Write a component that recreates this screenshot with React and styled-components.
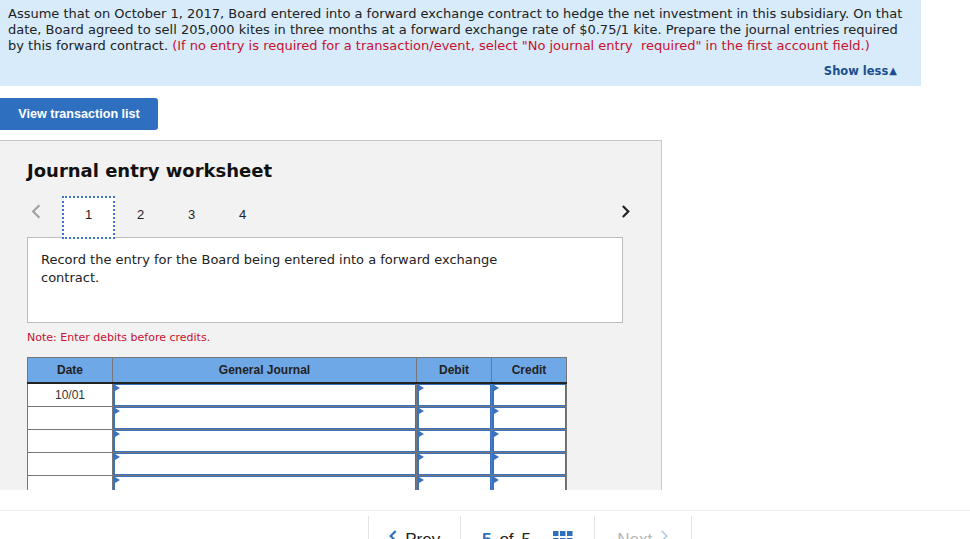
import React from 'react';
import styled, { createGlobalStyle } from 'styled-components';

const GlobalStyle = createGlobalStyle`
  html, body {
    margin: 0;
    padding: 0;
    background: #fff;
  }
  * {
    box-sizing: border-box;
  }
`;

const Page = styled.div`
  width: 970px;
  height: 539px;
  overflow: hidden;
  display: flex;
  flex-direction: column;
  font-family: 'DejaVu Sans', Verdana, sans-serif;
  color: #222;
`;

const Content = styled.div`
  height: 490px;
  overflow: hidden;
  flex-shrink: 0;
`;

const Question = styled.div`
  width: 921px;
  height: 86px;
  background: #d7ebfa;
  padding: 6px 8px 0 8px;
  font-size: 13px;
  line-height: 16px;
  p {
    margin: 0;
  }
  .hint {
    color: #c8102e;
  }
`;

const ShowLess = styled.div`
  display: flex;
  justify-content: flex-end;
  align-items: center;
  gap: 1px;
  margin-top: 9px;
  padding-right: 16px;
  font-size: 11.5px;
  font-weight: bold;
  color: #1c4f8f;
`;

const Button = styled.button`
  display: block;
  margin-top: 12px;
  width: 158px;
  height: 32px;
  border: none;
  border-radius: 0 3px 3px 0;
  background: #2f6fbf;
  color: #fff;
  font-family: 'Liberation Sans', Arial, sans-serif;
  font-weight: bold;
  font-size: 12.6px;
  padding: 0;
`;

const Panel = styled.div`
  margin-top: 10px;
  width: 662px;
  height: 400px;
  background: #f2f2f2;
  border-top: 1px solid #c9c9c9;
  border-right: 1px solid #c9c9c9;
  padding: 19px 0 0 27px;
`;

const Title = styled.h2`
  margin: 0;
  font-size: 18px;
  line-height: 22px;
  font-weight: bold;
  color: #111;
`;

const TabBar = styled.div`
  display: flex;
  align-items: flex-end;
  margin-top: 14px;
  width: 625px;
  height: 41px;
`;

const Arrow = styled.div`
  width: 35px;
  height: 41px;
  display: flex;
  align-items: center;
  padding: 0 0 11px 4px;
`;

const Tab = styled.div`
  width: ${p => p.$active ? '53px' : '51px'};
  height: ${p => p.$active ? '43px' : '41px'};
  display: flex;
  align-items: center;
  justify-content: center;
  padding-bottom: ${p => p.$active ? '6px' : '4px'};
  font-family: 'Liberation Sans', Arial, sans-serif;
  font-size: 13px;
  color: #222;
  background: ${p => p.$active ? '#fff' : 'transparent'};
  border: ${p => p.$active ? '2px dotted #3d73c4' : 'none'};
  position: relative;
  z-index: 2;
  margin-bottom: ${p => p.$active ? '-2px' : '0'};
`;

const Spacer = styled.div`
  flex: 1;
`;

const Description = styled.div`
  width: 596px;
  height: 86px;
  background: #fff;
  border: 1px solid #bdbdbd;
  padding: 13px 13px;
  font-size: 13px;
  line-height: 18px;
  p {
    margin: 0;
    max-width: 470px;
  }
`;

const Note = styled.div`
  margin-top: 8px;
  font-size: 11px;
  color: #c8102e;
`;

const Table = styled.table`
  margin-top: 13px;
  border-collapse: collapse;
  font-family: 'Liberation Sans', Arial, sans-serif;
  font-size: 12px;
  table-layout: fixed;
  width: 540px;
`;

const Th = styled.th`
  width: ${p => p.$w}px;
  height: 25px;
  background: #6fa8e6;
  color: #222;
  font-weight: bold;
  border: 1px solid #777;
  border-left: ${p => p.$first ? '1px solid #777' : '1px solid #222'};
  border-bottom: 2px solid #222;
  padding: 0;
`;

const DateCell = styled.td`
  height: 23px;
  border: 1px solid #777;
  background: #fff;
  text-align: center;
  vertical-align: top;
  padding-top: 4px;
  color: #333;
`;

const InputCell = styled.td`
  height: 23px;
  border: 1px solid #777;
  padding: 0;
  background: #fff;
`;

const Field = styled.div`
  position: relative;
  height: 22px;
  border: 1px solid #3a72bf;
  border-left-width: 2px;
  background: #fff;
  &::before {
    content: '';
    position: absolute;
    left: 0;
    top: 0;
    border-top: 3px solid transparent;
    border-bottom: 3px solid transparent;
    border-left: 5px solid #3a72bf;
  }
`;

const Footer = styled.div`
  flex: 1;
  padding-top: 20px;
`;

const Nav = styled.div`
  border-top: 1px solid #ececec;
  height: 60px;
  display: flex;
  padding: 5px 0 0 368px;
`;

const NavItem = styled.div`
  width: ${p => p.$w}px;
  border-left: 1px solid #e4e4e4;
  border-right: ${p => p.$last ? '1px solid #e4e4e4' : 'none'};
  display: flex;
  align-items: flex-start;
  justify-content: center;
  gap: 8px;
  padding-top: 14px;
  font-family: 'Liberation Sans', Arial, sans-serif;
  font-size: 17px;
  color: ${p => p.$muted ? '#b5b5b5' : '#222'};
  span.cur {
    color: #2f6fbf;
    font-weight: bold;
  }
`;

const Chevron = ({ dir = 'left', color, size = 14, weight = 2 }) => (
  <svg width={size * 0.7} height={size} viewBox="0 0 10 14">
    <path
      d={dir === 'left' ? 'M8 1 L2 7 L8 13' : 'M2 1 L8 7 L2 13'}
      fill="none"
      stroke={color}
      strokeWidth={weight}
    />
  </svg>
);

const GridIcon = () => (
  <svg width="20" height="14" viewBox="0 0 20 14">
    {[0, 7, 14].map(x => (
      <rect key={x} x={x} y="0" width="5.5" height="5" fill="#2f6fbf" />
    ))}
    {[0, 7, 14].map(x => (
      <rect key={'b' + x} x={x} y="7" width="5.5" height="5" fill="#2f6fbf" />
    ))}
  </svg>
);

const rows = ['10/01', '', '', '', '', ''];

export default function App() {
  return (
    <Page>
      <GlobalStyle />
      <Content>
        <Question>
          <p>
            Assume that on October 1, 2017, Board entered into a forward exchange contract to hedge the net investment in this subsidiary. On that date, Board agreed to sell 205,000 kites in three months at a forward exchange rate of $0.75/1 kite. Prepare the journal entries required by this forward contract.{' '}
            <span className="hint">(If no entry is required for a transaction/event, select "No journal entry&nbsp; required" in the first account field.)</span>
          </p>
          <ShowLess>Show less<span style={{ fontSize: 10 }}>▲</span></ShowLess>
        </Question>

        <Button>View transaction list</Button>

        <Panel>
          <Title>Journal entry worksheet</Title>
          <TabBar>
            <Arrow><Chevron dir="left" color="#a0a0a0" size={15} /></Arrow>
            <Tab $active>1</Tab>
            <Tab>2</Tab>
            <Tab>3</Tab>
            <Tab>4</Tab>
            <Spacer />
            <Arrow><Chevron dir="right" color="#222" size={13} weight={2.4} /></Arrow>
          </TabBar>
          <Description>
            <p>Record the entry for the Board being entered into a forward exchange contract.</p>
          </Description>
          <Note>Note: Enter debits before credits.</Note>
          <Table>
            <thead>
              <tr>
                <Th $w={85} $first>Date</Th>
                <Th $w={304}>General Journal</Th>
                <Th $w={75}>Debit</Th>
                <Th $w={75}>Credit</Th>
              </tr>
            </thead>
            <tbody>
              {rows.map((d, i) => (
                <tr key={i}>
                  <DateCell>{d}</DateCell>
                  <InputCell><Field /></InputCell>
                  <InputCell><Field /></InputCell>
                  <InputCell><Field /></InputCell>
                </tr>
              ))}
            </tbody>
          </Table>
        </Panel>
      </Content>

      <Footer>
        <Nav>
          <NavItem $w={92}>
            <Chevron dir="left" color="#2f6fbf" size={12} weight={2.6} />
            <span>Prev</span>
          </NavItem>
          <NavItem $w={134}>
            <span className="cur">5</span>
            <span>of</span>
            <span>5</span>
            <span style={{ marginLeft: 14 }}><GridIcon /></span>
          </NavItem>
          <NavItem $w={98} $muted $last>
            <span>Next</span>
            <Chevron dir="right" color="#b3cbea" size={12} />
          </NavItem>
        </Nav>
      </Footer>
    </Page>
  );
}
